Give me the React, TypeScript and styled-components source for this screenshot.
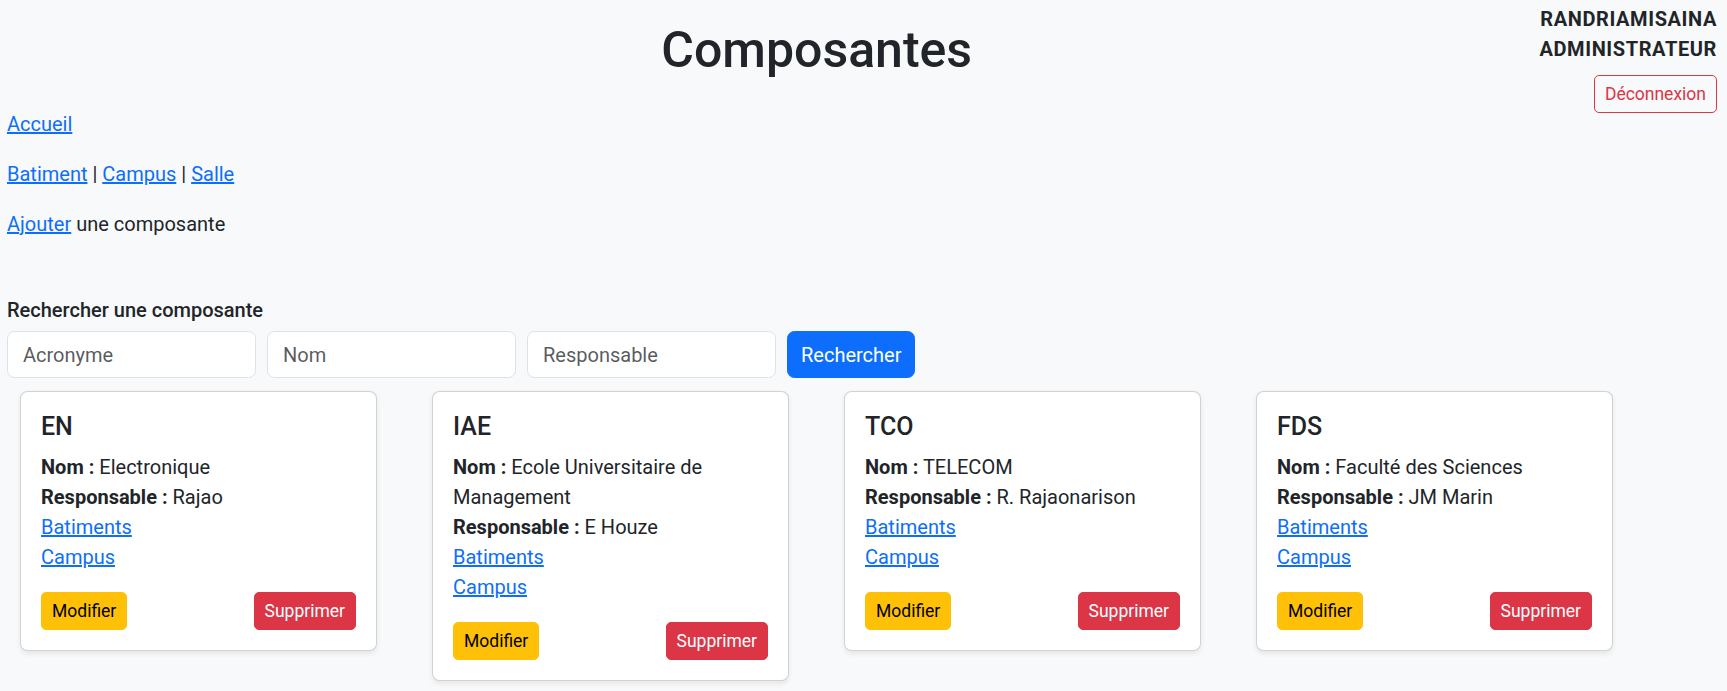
import React from "react";
import styled, { createGlobalStyle } from "styled-components";

const GlobalStyle = createGlobalStyle`
  html, body {
    margin: 0;
    padding: 0;
    background: #f8f9fa;
  }
  body {
    font-family: Roboto, "Liberation Sans", sans-serif;
    font-size: 20px;
    line-height: 30px;
    color: #212529;
  }
  * { box-sizing: border-box; }
`;

const Page = styled.div`
  display: flow-root;
  padding: 0 9px 0 7px;
  min-height: 100vh;
`;

const UserBlock = styled.div`
  float: right;
  margin: 4px 1px 0 0;
  text-align: right;
  font-weight: 700;
  display: flex;
  flex-direction: column;
  align-items: flex-end;
`;

const UserLine = styled.div`
  line-height: 30px;
  letter-spacing: 0.6px;
`;

const Title = styled.h1`
  margin: 0 0 29px;
  padding: 20px 0 0 87px;
  text-align: center;
  font-size: 50px;
  line-height: 60px;
  font-weight: 500;
`;

const NavLine = styled.p`
  margin: 0 0 20px;
`;

const Link = styled.a`
  color: #0d6efd;
  text-decoration: underline;
  cursor: pointer;
`;

const SearchForm = styled.form`
  margin-top: 59px;
`;

const SearchLabel = styled.div`
  font-size: 20px;
  line-height: 24px;
  font-weight: 500;
  margin-bottom: 9px;
`;

const SearchRow = styled.div`
  display: flex;
  gap: 11px;
`;

const Input = styled.input`
  width: 249px;
  height: 47px;
  padding: 7.5px 15px;
  font-family: inherit;
  font-size: 20px;
  line-height: 30px;
  color: #212529;
  background: #fff;
  border: 1px solid #dee2e6;
  border-radius: 7.5px;
  outline: none;
  &::placeholder {
    color: rgba(33, 37, 41, 0.75);
  }
`;

type Variant = "primary" | "warning" | "danger" | "outlineDanger";

const variantStyles: Record<Variant, string> = {
  primary: "background:#0d6efd;border-color:#0d6efd;color:#fff;",
  warning: "background:#ffc107;border-color:#ffc107;color:#000;",
  danger: "background:#dc3545;border-color:#dc3545;color:#fff;",
  outlineDanger: "background:transparent;border-color:#dc3545;color:#dc3545;",
};

const Button = styled.button<{ $variant: Variant; $small?: boolean }>`
  font-family: inherit;
  font-weight: 400;
  border: 1px solid transparent;
  cursor: pointer;
  white-space: nowrap;
  ${(p) =>
    p.$small
      ? `font-size:17.5px;line-height:26.25px;padding:5px 10px;border-radius:5px;`
      : `font-size:20px;line-height:30px;padding:7px 13px;border-radius:7.5px;`}
  ${(p) => variantStyles[p.$variant]}
`;

const LogoutButton = styled(Button)`
  margin-top: 11px;
`;

const Cards = styled.div`
  display: grid;
  grid-template-columns: repeat(4, 357px);
  column-gap: 55px;
  align-items: start;
  margin-top: 13px;
  padding-left: 13px;
`;

const Card = styled.div`
  background: #fff;
  border: 1px solid rgba(0, 0, 0, 0.175);
  border-radius: 7.5px;
  box-shadow: 0 2.5px 5px rgba(0, 0, 0, 0.075);
  padding: 20px;
`;

const CardTitle = styled.h5`
  margin: 0 0 10px;
  font-size: 25px;
  line-height: 30px;
  font-weight: 500;
`;

const CardLine = styled.div`
  line-height: 30px;
`;

const Label = styled.b`
  font-weight: 700;
`;

const CardActions = styled.div`
  display: flex;
  justify-content: space-between;
  margin-top: 20px;
`;

const composantes = [
  { acronyme: "EN", nom: "Electronique", responsable: "Rajao" },
  { acronyme: "IAE", nom: "Ecole Universitaire de Management", responsable: "E Houze" },
  { acronyme: "TCO", nom: "TELECOM", responsable: "R. Rajaonarison" },
  { acronyme: "FDS", nom: "Faculté des Sciences", responsable: "JM Marin" },
];

export default function App() {
  return (
    <>
      <GlobalStyle />
      <Page>
        <UserBlock>
          <UserLine>RANDRIAMISAINA</UserLine>
          <UserLine>ADMINISTRATEUR</UserLine>
          <LogoutButton $variant="outlineDanger" $small>
            Déconnexion
          </LogoutButton>
        </UserBlock>
        <Title>Composantes</Title>

        <NavLine>
          <Link>Accueil</Link>
        </NavLine>
        <NavLine>
          <Link>Batiment</Link> | <Link>Campus</Link> | <Link>Salle</Link>
        </NavLine>
        <NavLine>
          <Link>Ajouter</Link> une composante
        </NavLine>

        <SearchForm onSubmit={(e) => e.preventDefault()}>
          <SearchLabel>Rechercher une composante</SearchLabel>
          <SearchRow>
            <Input placeholder="Acronyme" />
            <Input placeholder="Nom" />
            <Input placeholder="Responsable" />
            <Button $variant="primary" type="submit">
              Rechercher
            </Button>
          </SearchRow>
        </SearchForm>

        <Cards>
          {composantes.map((c) => (
            <Card key={c.acronyme}>
              <CardTitle>{c.acronyme}</CardTitle>
              <CardLine>
                <Label>Nom :</Label> {c.nom}
              </CardLine>
              <CardLine>
                <Label>Responsable :</Label> {c.responsable}
              </CardLine>
              <CardLine>
                <Link>Batiments</Link>
              </CardLine>
              <CardLine>
                <Link>Campus</Link>
              </CardLine>
              <CardActions>
                <Button $variant="warning" $small>
                  Modifier
                </Button>
                <Button $variant="danger" $small>
                  Supprimer
                </Button>
              </CardActions>
            </Card>
          ))}
        </Cards>
      </Page>
    </>
  );
}
